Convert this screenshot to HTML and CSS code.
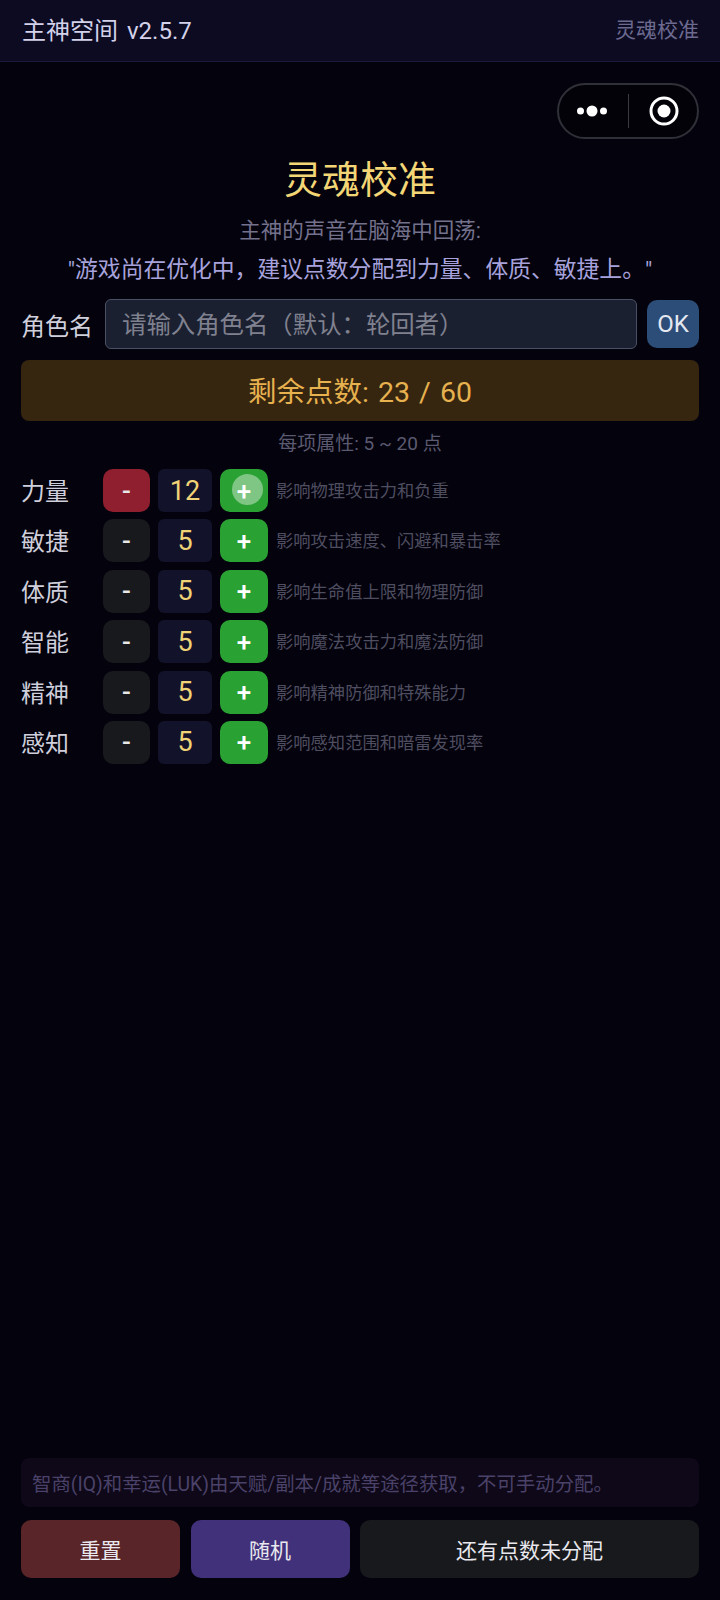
FILE: index.html
```html
<!DOCTYPE html>
<html lang="zh">
<head>
<meta charset="utf-8">
<title>灵魂校准</title>
<link rel="stylesheet" href="styles.css">
</head>
<body>
<header class="topbar">
  <div class="topbar-title">主神空间 v2.5.7</div>
  <div class="topbar-sub">灵魂校准</div>
</header>
<div class="capsule">
  <svg class="cap-dots" width="30" height="12" viewBox="0 0 30 12"><circle cx="3.5" cy="6" r="3.5" fill="#fff"/><circle cx="15" cy="6" r="5.5" fill="#fff"/><circle cx="26.5" cy="6" r="3.5" fill="#fff"/></svg>
  <span class="cap-line"></span>
  <svg class="cap-target" width="30" height="30" viewBox="0 0 30 30"><circle cx="15" cy="15" r="13" fill="none" stroke="#fff" stroke-width="3"/><circle cx="15" cy="15" r="6.5" fill="#fff"/></svg>
</div>
<main class="content">
  <h1 class="title">灵魂校准</h1>
  <p class="voice">主神的声音在脑海中回荡:</p>
  <p class="quote">"游戏尚在优化中，建议点数分配到力量、体质、敏捷上。"</p>
  <div class="name-row">
    <label class="name-label">角色名</label>
    <div class="name-input">请输入角色名（默认：轮回者）</div>
    <button class="ok">OK</button>
  </div>
  <div class="points">剩余点数: 23 / 60</div>
  <div class="range">每项属性: 5 ~ 20 点</div>
  <div class="attrs">
    <div class="attr">
      <span class="attr-name">力量</span>
      <button class="btn-minus active">-</button>
      <span class="attr-val">12</span>
      <button class="btn-plus">+<span class="ripple"></span></button>
      <span class="attr-desc">影响物理攻击力和负重</span>
    </div>
    <div class="attr">
      <span class="attr-name">敏捷</span>
      <button class="btn-minus">-</button>
      <span class="attr-val">5</span>
      <button class="btn-plus">+</button>
      <span class="attr-desc">影响攻击速度、闪避和暴击率</span>
    </div>
    <div class="attr">
      <span class="attr-name">体质</span>
      <button class="btn-minus">-</button>
      <span class="attr-val">5</span>
      <button class="btn-plus">+</button>
      <span class="attr-desc">影响生命值上限和物理防御</span>
    </div>
    <div class="attr">
      <span class="attr-name">智能</span>
      <button class="btn-minus">-</button>
      <span class="attr-val">5</span>
      <button class="btn-plus">+</button>
      <span class="attr-desc">影响魔法攻击力和魔法防御</span>
    </div>
    <div class="attr">
      <span class="attr-name">精神</span>
      <button class="btn-minus">-</button>
      <span class="attr-val">5</span>
      <button class="btn-plus">+</button>
      <span class="attr-desc">影响精神防御和特殊能力</span>
    </div>
    <div class="attr">
      <span class="attr-name">感知</span>
      <button class="btn-minus">-</button>
      <span class="attr-val">5</span>
      <button class="btn-plus">+</button>
      <span class="attr-desc">影响感知范围和暗雷发现率</span>
    </div>
  </div>
  <div class="spacer"></div>
  <div class="note">智商(IQ)和幸运(LUK)由天赋/副本/成就等途径获取，不可手动分配。</div>
  <div class="actions">
    <button class="act act-reset">重置</button>
    <button class="act act-random">随机</button>
    <button class="act act-confirm">还有点数未分配</button>
  </div>
</main>
</body>
</html>
```

FILE: styles.css
```css
* { box-sizing: border-box; }
html, body { margin: 0; padding: 0; }
body {
  width: 720px;
  height: 1600px;
  background: #03020d;
  color: #d8d8e8;
  font-family: Roboto, "Noto Sans CJK SC", sans-serif;
  display: flex;
  flex-direction: column;
  position: relative;
  overflow: hidden;
}
button { font-family: inherit; border: 0; padding: 0; }
.topbar {
  height: 62px;
  flex: none;
  display: flex;
  align-items: center;
  justify-content: space-between;
  padding: 0 21px 0 22px;
  background: #0c0b22;
  border-bottom: 1px solid #1b1a3c;
}
.topbar-title { font-size: 24px; color: #d3d2ea; line-height: 1; word-spacing: 3px; }
.topbar-sub { font-size: 21px; color: #6d6a90; line-height: 1; }
.capsule {
  position: absolute;
  left: 557px;
  top: 83px;
  width: 142px;
  height: 56px;
  border: 2px solid #303038;
  border-radius: 28px;
  background: #020208;
}
.cap-dots { position: absolute; left: 18px; top: 20px; }
.cap-line { position: absolute; left: 69px; top: 9px; width: 1px; height: 34px; background: #3a3a42; }
.cap-target { position: absolute; left: 90px; top: 11px; }
.content {
  flex: 1;
  display: flex;
  flex-direction: column;
  padding: 0 21px 22px;
}
.title {
  margin: 92px 0 0;
  text-align: center;
  font-size: 38px;
  font-weight: 400;
  line-height: 52px;
  color: #f3d675;
}
.voice {
  margin: 9px 0 0;
  text-align: center;
  font-size: 21.5px;
  line-height: 32px;
  color: #73718c;
}
.quote {
  margin: 7px 0 0;
  text-align: center;
  font-size: 22.8px;
  line-height: 32px;
  color: #a7a2dc;
  white-space: nowrap;
}
.name-row {
  margin-top: 13px;
  display: flex;
  align-items: center;
  gap: 10px;
}
.name-label { font-size: 24px; color: #d0d0dc; flex: none; width: 74px; white-space: nowrap; }
.name-input {
  flex: 1;
  height: 50px;
  display: flex;
  align-items: center;
  padding: 0 16px 3px;
  background: #1a2030;
  border: 1px solid #4c5064;
  border-radius: 6px;
  font-size: 24.4px;
  color: #80818f;
}
.ok {
  width: 52px;
  height: 48px;
  background: #2c4d78;
  border-radius: 10px;
  color: #e4e8f0;
  font-size: 24px;
}
.points {
  margin-top: 11px;
  height: 61px;
  display: flex;
  align-items: center;
  justify-content: center;
  padding-bottom: 2px;
  background: #36250f;
  border-radius: 8px;
  font-size: 28.5px;
  word-spacing: 2px;
  color: #e6b14e;
}
.range {
  margin-top: 9px;
  text-align: center;
  font-size: 19px;
  line-height: 28px;
  color: #5b5a70;
}
.attrs {
  margin-top: 11px;
  display: flex;
  flex-direction: column;
  gap: 7.4px;
}
.attr {
  height: 43px;
  display: flex;
  align-items: center;
}
.attr-name { width: 82px; flex: none; font-size: 24px; color: #cfcfdc; padding-bottom: 2px; }
.btn-minus, .btn-plus {
  position: relative;
  height: 43px;
  flex: none;
  border-radius: 10px;
  font-size: 26px;
  font-weight: 500;
  color: #fff;
  overflow: hidden;
}
.btn-minus { width: 47px; background: #18191d; color: #e8e8e8; }
.btn-minus.active { background: #8f1f2f; }
.btn-plus { width: 48px; background: #2aa133; }
.attr-val {
  width: 54px;
  height: 43px;
  flex: none;
  margin: 0 8px;
  display: flex;
  align-items: center;
  justify-content: center;
  background: #12122a;
  border-radius: 6px;
  font-size: 27px;
  color: #f0d376;
}
.attr-desc { margin-left: 8px; padding-bottom: 2px; font-size: 17.3px; color: #4f4e60; white-space: nowrap; }
.ripple {
  position: absolute;
  left: 12px;
  top: 5px;
  width: 31px;
  height: 31px;
  border-radius: 50%;
  background: rgba(255, 255, 255, 0.4);
}
.spacer { flex: 1; }
.note {
  height: 49px;
  display: flex;
  align-items: center;
  padding: 0 11px 1px;
  background: #0e0818;
  border-radius: 8px;
  font-size: 19.4px;
  color: #4a4268;
  white-space: nowrap;
}
.actions {
  margin-top: 13px;
  display: flex;
  gap: 10.5px;
}
.act {
  height: 58px;
  border-radius: 10px;
  font-size: 21px;
  color: #e8e8ee;
}
.act-reset { width: 159px; flex: none; background: #5a2528; }
.act-random { width: 159px; flex: none; background: #41307a; }
.act-confirm { flex: 1; background: #18191c; }
```
